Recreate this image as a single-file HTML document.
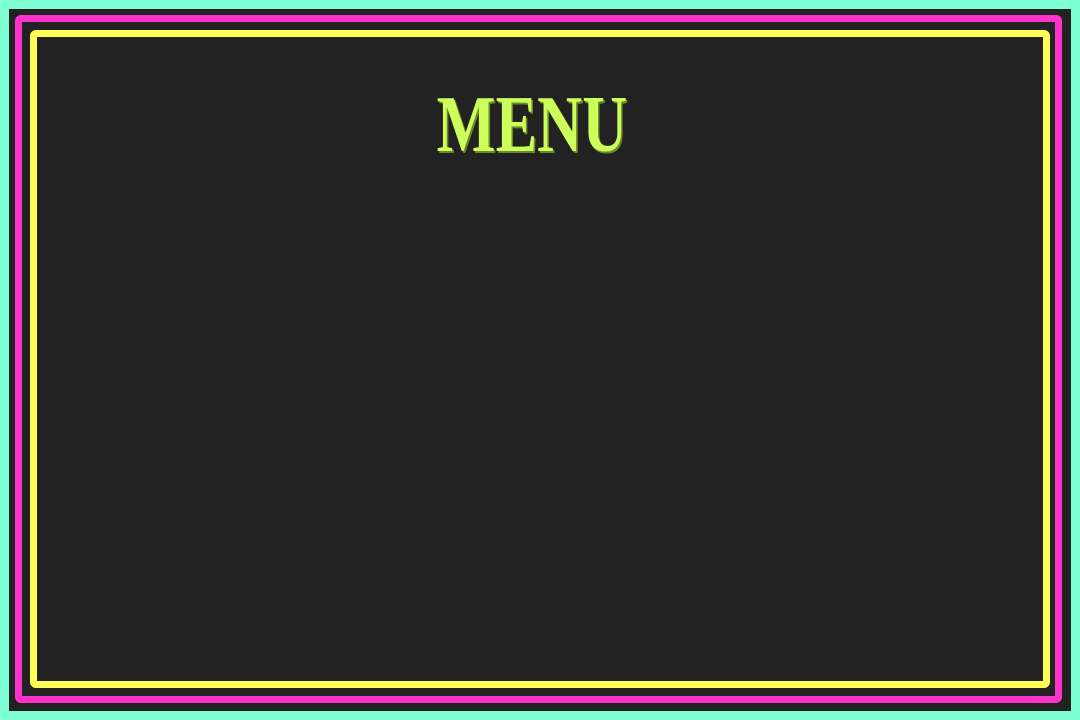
<!DOCTYPE html>
<html><head><style>
html,body{margin:0;padding:0}
body{width:1080px;height:720px;background:#7fffd4;position:relative;overflow:hidden}
.dark{position:absolute;left:9px;top:9px;right:9px;bottom:9px;background:#222}
.pink{position:absolute;left:15px;top:15px;width:1047px;height:688px;box-sizing:border-box;border:7px solid #ff33cc;border-radius:6px}
.yel{position:absolute;left:30px;top:30px;width:1020px;height:658px;box-sizing:border-box;border:7px solid #ffff55;border-radius:6px}
h1{position:absolute;left:-8px;width:1080px;top:80px;margin:0;text-align:center;font-family:"Liberation Serif",serif;font-weight:bold;font-size:80px;line-height:90px;color:#ccff5a;transform:scaleX(0.78);text-shadow:2px 2px 0 #6a8a2a}
</style></head><body>
<div class="dark"></div><div class="pink"></div><div class="yel"></div>
<h1>MENU</h1>
</body></html>
